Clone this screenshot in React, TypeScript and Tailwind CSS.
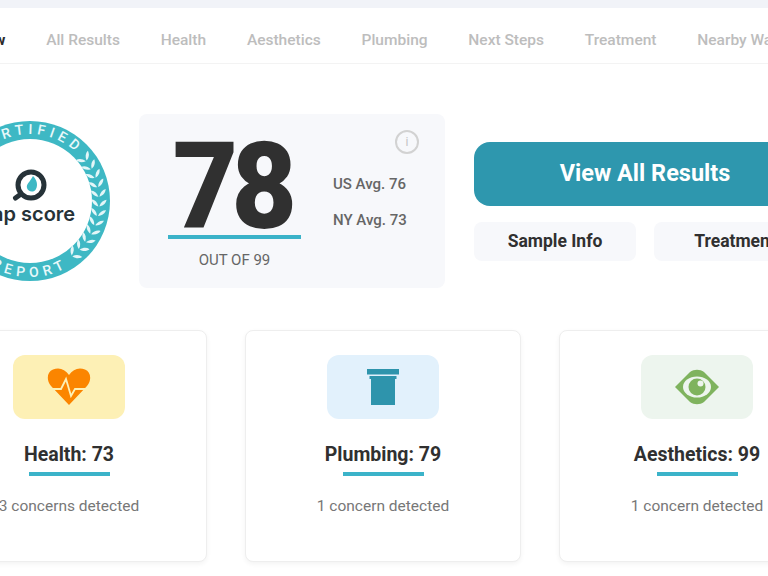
const FONT = "font-['Roboto','Liberation_Sans',sans-serif]";

const NAV_ITEMS = ["All Results", "Health", "Aesthetics", "Plumbing", "Next Steps", "Treatment", "Nearby Water"];

const LEAF_ANGLES = [-38, -30, -22, -14, -6, 2, 10, 18, 26, 34, 42, 50];

function Laurel() {
  return (
    <g fill="#e4f6f8">
      {LEAF_ANGLES.map((deg) => {
        const rad = (deg * Math.PI) / 180;
        const x = 30 + 69 * Math.cos(rad);
        const y = 202 + 69 * Math.sin(rad);
        return (
          <g key={deg} transform={`translate(${x} ${y}) rotate(${deg})`}>
            <path d="M-0.500 3 C-5 2 -7 -1 -7.500 -4 C-4 -3.500 -1.500 -1 -0.500 3Z" />
            <path d="M0.500 3 C5 2 7 -1 7.500 -4 C4 -3.500 1.500 -1 0.500 3Z" />
          </g>
        );
      })}
    </g>
  );
}

function Badge() {
  return (
    <svg width="160" height="160" viewBox="-50 122 160 160" className="shrink-0">
      <circle cx="30" cy="202" r="80" fill="#3eb8c4" />
      <circle cx="30" cy="202" r="62" fill="#fff" />
      <defs>
        <path id="badge-top" d="M-37 202 A67 67 0 0 1 97 202" />
        <path id="badge-bottom" d="M-46 202 A76 76 0 0 0 106 202" />
      </defs>
      <text fill="#e9f8fa" fontSize="14" fontWeight="500" letterSpacing="4.5" fontFamily="Roboto, sans-serif" textAnchor="middle">
        <textPath href="#badge-top" startOffset="50%">CERTIFIED</textPath>
      </text>
      <text fill="#e9f8fa" fontSize="14" fontWeight="500" letterSpacing="5" fontFamily="Roboto, sans-serif" textAnchor="middle">
        <textPath href="#badge-bottom" startOffset="50%">REPORT</textPath>
      </text>
      <Laurel />
      <circle cx="31" cy="186" r="13" fill="none" stroke="#263238" strokeWidth="5" />
      <path d="M21 195 L15.500 199" stroke="#263238" strokeWidth="5" strokeLinecap="round" />
      <path d="M33 177 C37 181 38 186 36 190 C34 194 28 193 27 189 C26 185 30 183 33 177Z" fill="#3eb8c4" />
      <text x="30" y="222" textAnchor="middle" fontSize="20" fontWeight="600" fill="#263238" fontFamily="Inter, sans-serif">
        tap score
      </text>
    </svg>
  );
}

function HeartIcon() {
  return (
    <svg width="44" height="38" viewBox="0 0 44 38">
      <path
        d="M22 37 L4 18 C-1 12 0 4 6 1.500 C12 -1 18 1 22 7 C26 1 32 -1 38 1.500 C44 4 45 12 40 18Z"
        fill="#fb8500"
      />
      <path d="M1 21 H14 L19 11 L24 28 L28 21 H43" fill="none" stroke="#fdf0b5" strokeWidth="1.800" />
    </svg>
  );
}

function PipeIcon() {
  return (
    <svg width="32" height="36" viewBox="0 0 32 36">
      <rect x="0" y="0" width="32" height="5.500" fill="#2e94ac" />
      <rect x="2.500" y="7" width="27" height="3" fill="#2e94ac" />
      <rect x="4" y="10" width="24" height="26" fill="#2e94ac" />
    </svg>
  );
}

function EyeIcon() {
  return (
    <svg width="46" height="36" viewBox="0 0 46 36">
      <path d="M1 18 L16 3 C20 0 26 0 30 3 L45 18 L30 33 C26 36 20 36 16 33Z" fill="#7fb35e" />
      <ellipse cx="23" cy="18" rx="14" ry="10.500" fill="#edf5ee" />
      <circle cx="23" cy="18" r="8.500" fill="#7fb35e" />
      <circle cx="26.500" cy="14.500" r="3" fill="#edf5ee" />
    </svg>
  );
}

const CARDS = [
  { title: "Health: 73", desc: "3 concerns detected", tile: "bg-[#fdf0b5]", icon: <HeartIcon /> },
  { title: "Plumbing: 79", desc: "1 concern detected", tile: "bg-[#e2f1fc]", icon: <PipeIcon /> },
  { title: "Aesthetics: 99", desc: "1 concern detected", tile: "bg-[#edf5ee]", icon: <EyeIcon /> },
];

export default function App() {
  return (
    <div className={`${FONT} relative h-[576px] w-[768px] overflow-hidden bg-white`}>
      <div className="h-2 bg-[#f1f3f8]" />

      <nav className="flex h-[56px] items-center gap-[40.800px] whitespace-nowrap border-b border-[#f3f3f3] pl-[46px] pt-[10px] text-[15.500px] font-medium text-[#bdbdbd]">
        <span className="-ml-[105px] font-bold text-[#2b2b2b]">Overview</span>
        {NAV_ITEMS.map((item) => (
          <span key={item}>{item}</span>
        ))}
      </nav>

      <section className="-ml-[50px] mt-[50px] flex items-center gap-[29px]">
        <Badge />
        <div className="relative flex h-[174px] w-[306px] shrink-0 rounded-lg bg-[#f7f8fb] pl-[29px]">
          <div className="flex w-[133px] flex-col items-center">
            <div className="mr-[5px] mt-[25px] scale-x-[0.94] text-[120px] font-black leading-[96px] tracking-[-7px] text-[#303030]">78</div>
            <div className="h-1 w-full bg-[#3bb3c9]" />
            <div className="mt-[10px] text-[15px] text-[#666]">OUT OF 99</div>
          </div>
          <div className="ml-8 mt-[61px] flex flex-col gap-[18px] text-[15px] font-medium leading-[18px] text-[#666]">
            <span>US Avg. 76</span>
            <span>NY Avg. 73</span>
          </div>
          <div className="absolute left-[256px] top-4 flex size-6 items-center justify-center rounded-full border-2 border-[#d2d2d2] text-xs text-[#c4c4c4]">
            i
          </div>
        </div>
        <div className="flex w-[342px] shrink-0 flex-col gap-4">
          <button type="button" className="h-16 rounded-2xl bg-[#2e97ae] text-[23.500px] font-bold text-white">
            View All Results
          </button>
          <div className="flex gap-[18px]">
            <button type="button" className="h-[39px] w-[162px] rounded-lg bg-[#f7f8fb] text-[17.500px] font-bold text-[#303030]">
              Sample Info
            </button>
            <button type="button" className="h-[39px] w-[162px] rounded-lg bg-[#f7f8fb] text-[17.500px] font-bold text-[#303030]">
              Treatment
            </button>
          </div>
        </div>
      </section>

      <section className="-ml-[69px] mt-[42px] flex gap-[38px]">
        {CARDS.map((card) => (
          <div
            key={card.title}
            className="flex h-[232px] w-[276px] shrink-0 flex-col items-center rounded-lg border border-[#eeeeee] bg-white pt-[24px] shadow-[0_2px_5px_rgba(0,0,0,0.05)]"
          >
            <div className={`flex h-16 w-28 items-center justify-center rounded-xl ${card.tile}`}>{card.icon}</div>
            <div className="mt-[24px] text-[19.500px] font-bold leading-6 text-[#303030]">{card.title}</div>
            <div className="mt-[5px] h-1 w-[81px] bg-[#3bb3c9]" />
            <div className="mt-[20px] text-[15.500px] leading-5 text-[#777]">{card.desc}</div>
          </div>
        ))}
      </section>
    </div>
  );
}
